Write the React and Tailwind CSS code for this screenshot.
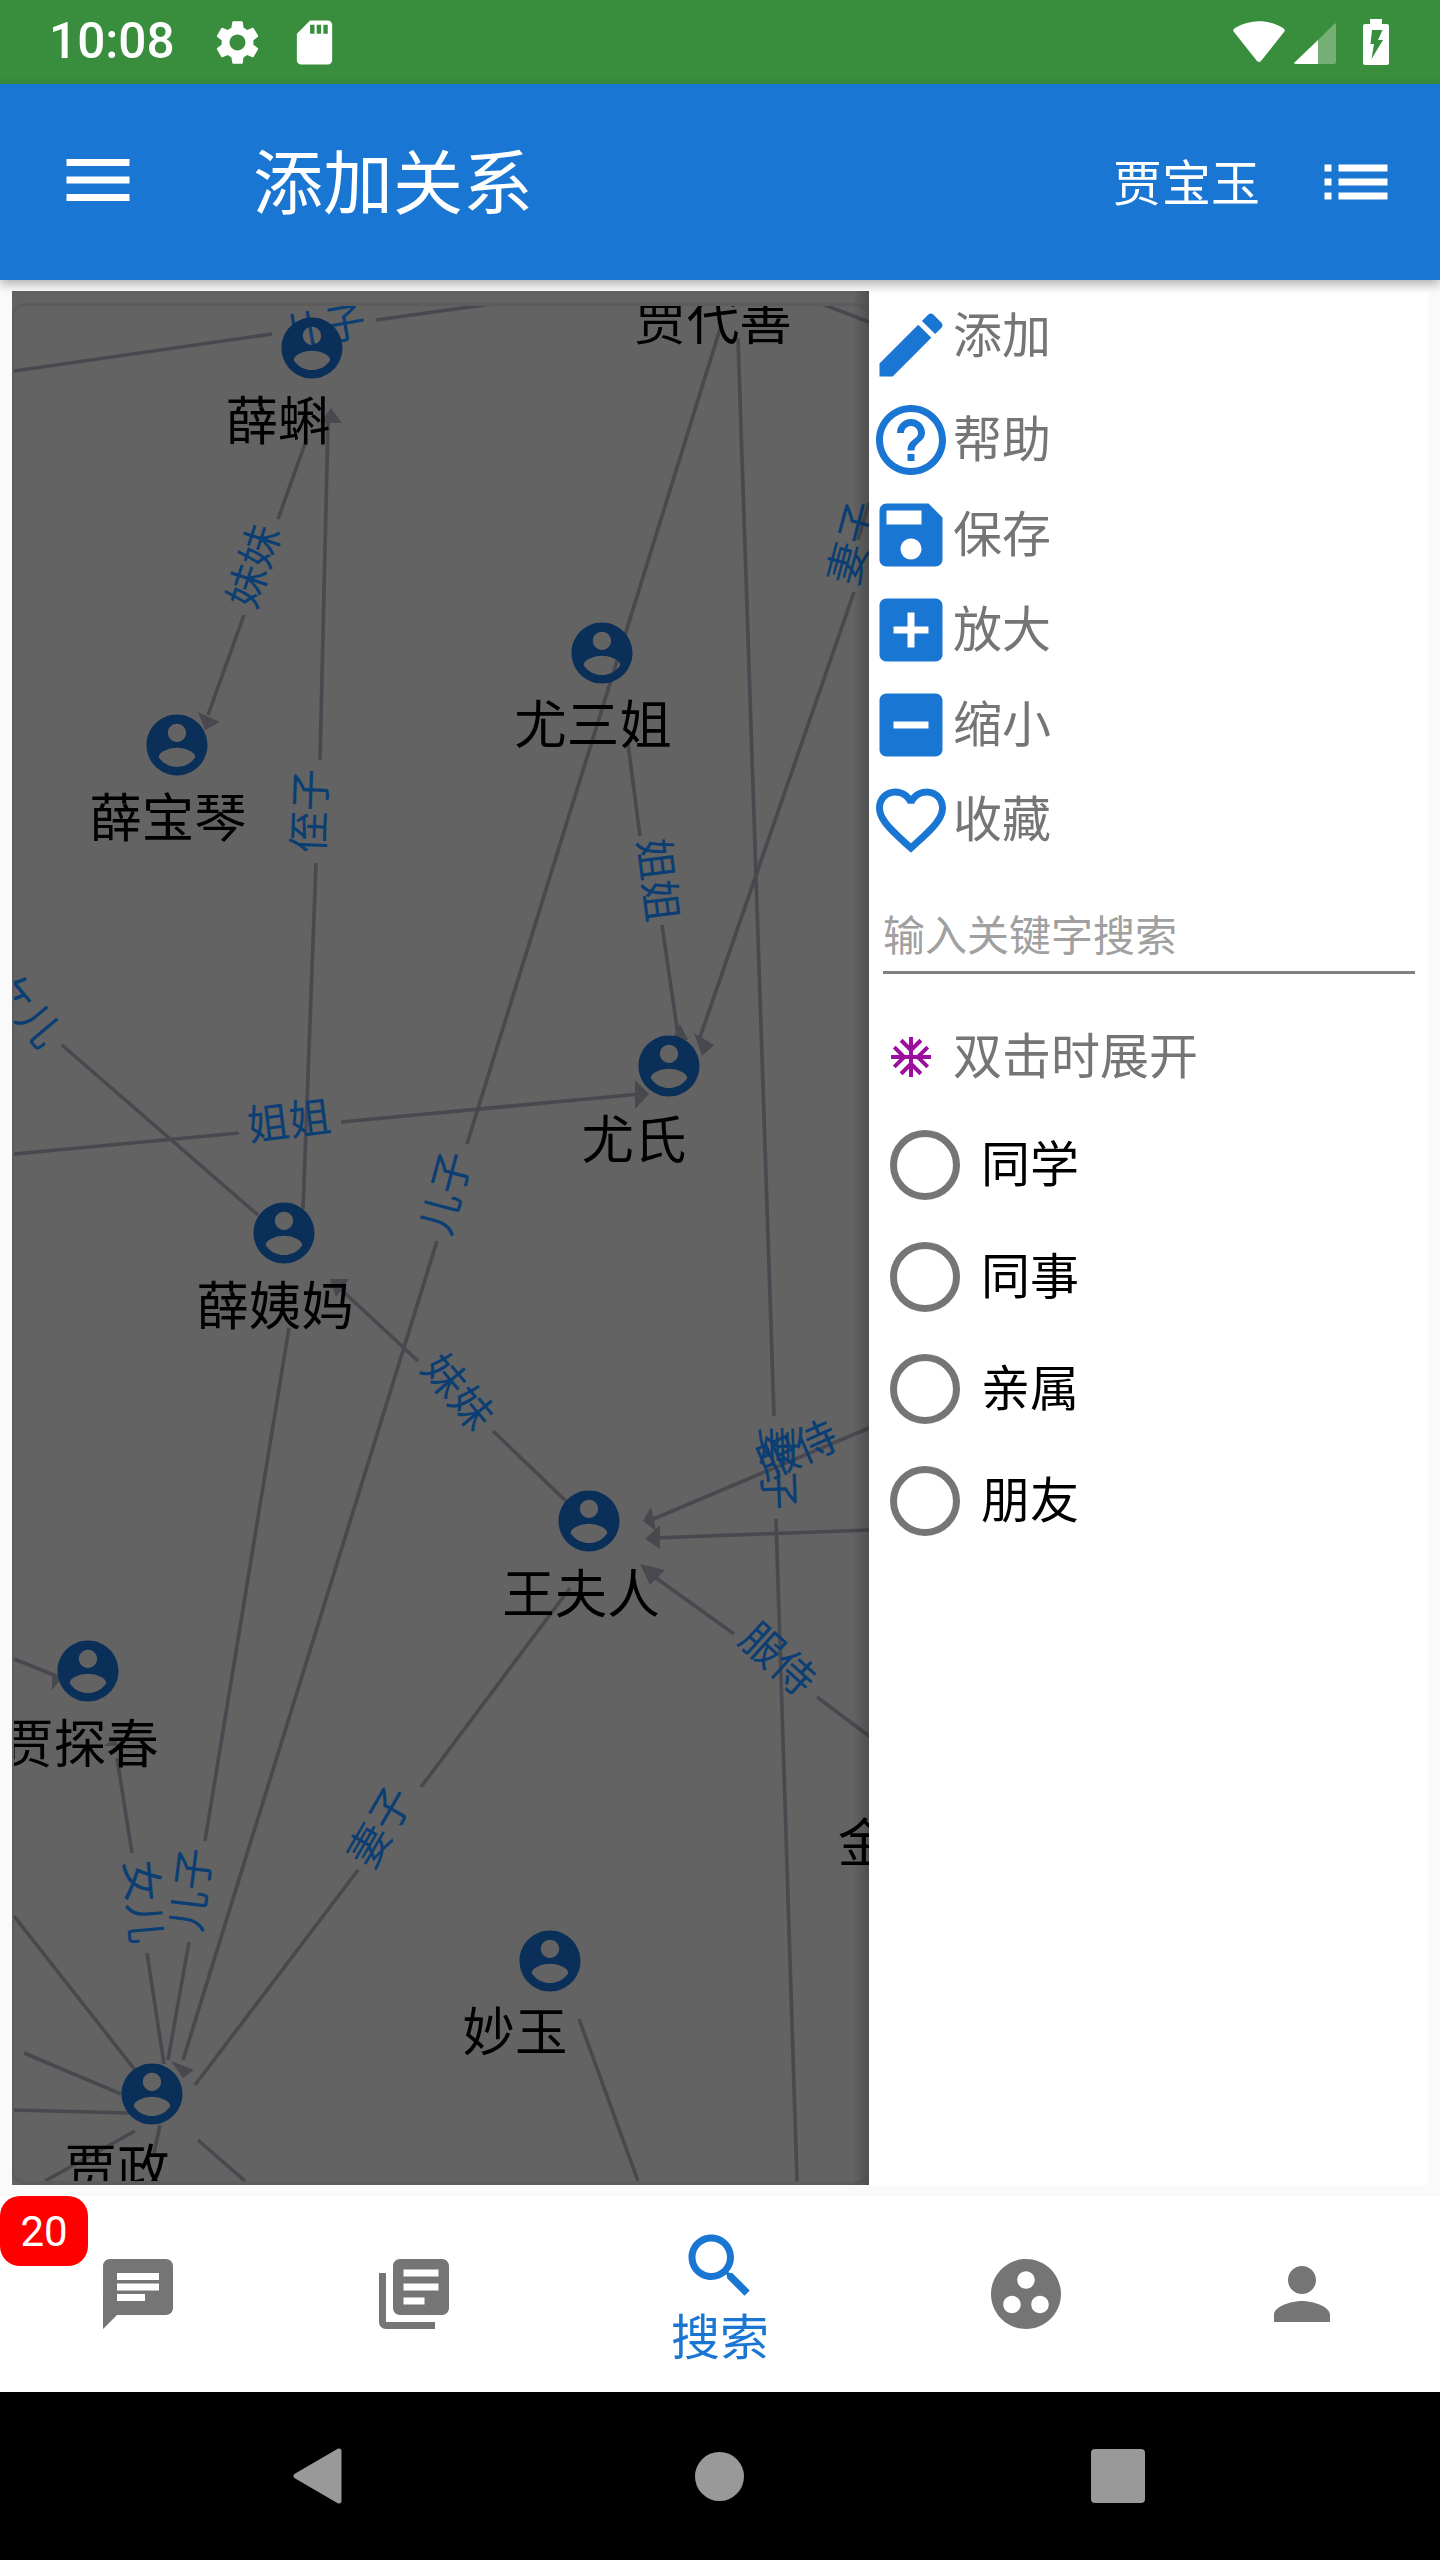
const ICONS = {
  menu: 'M3 18h18v-2H3v2zm0-5h18v-2H3v2zm0-7v2h18V6H3z',
  list: 'M3 13h2v-2H3v2zm0 4h2v-2H3v2zm0-8h2V7H3v2zm4 4h14v-2H7v2zm0 4h14v-2H7v2zM7 7v2h14V7H7z',
  settings:
    'M19.14 12.94c.04-.3.06-.61.06-.94 0-.32-.02-.64-.07-.94l2.03-1.58c.18-.14.23-.41.12-.61l-1.92-3.32c-.12-.22-.37-.29-.59-.22l-2.39.96c-.5-.38-1.03-.7-1.62-.94l-.36-2.54c-.04-.24-.24-.41-.48-.41h-3.84c-.24 0-.43.17-.47.41l-.36 2.54c-.59.24-1.13.57-1.62.94l-2.39-.96c-.22-.08-.47 0-.59.22L2.74 8.87c-.12.21-.08.47.12.61l2.03 1.58c-.05.3-.09.63-.09.94s.02.64.07.94l-2.03 1.58c-.18.14-.23.41-.12.61l1.92 3.32c.12.22.37.29.59.22l2.39-.96c.5.38 1.03.7 1.62.94l.36 2.54c.05.24.24.41.48.41h3.84c.24 0 .44-.17.47-.41l.36-2.54c.59-.24 1.13-.56 1.62-.94l2.39.96c.22.08.47 0 .59-.22l1.92-3.32c.12-.22.07-.47-.12-.61l-2.01-1.58zM12 15.6c-1.98 0-3.6-1.62-3.6-3.6s1.62-3.6 3.6-3.6 3.6 1.62 3.6 3.6-1.62 3.6-3.6 3.6z',
  sd: 'M18 2h-8L4.02 8 4 20c0 1.1.9 2 2 2h12c1.1 0 2-.9 2-2V4c0-1.1-.9-2-2-2zm-6 6h-2V4h2v4zm3 0h-2V4h2v4zm3 0h-2V4h2v4z',
  edit: 'M3 17.25V21h3.75L17.81 9.94l-3.75-3.75L3 17.25zM20.71 7.04c.39-.39.39-1.02 0-1.41l-2.34-2.34c-.39-.39-1.02-.39-1.41 0l-1.83 1.83 3.75 3.75 1.83-1.83z',
  help: 'M11 18h2v-2h-2v2zm1-16C6.48 2 2 6.48 2 12s4.48 10 10 10 10-4.48 10-10S17.52 2 12 2zm0 18c-4.41 0-8-3.59-8-8s3.59-8 8-8 8 3.59 8 8-3.59 8-8 8zm0-14c-2.21 0-4 1.79-4 4h2c0-1.1.9-2 2-2s2 .9 2 2c0 2-3 1.75-3 5h2c0-2.25 3-2.5 3-5 0-2.21-1.79-4-4-4z',
  save: 'M17 3H5c-1.11 0-2 .9-2 2v14c0 1.1.89 2 2 2h14c1.1 0 2-.9 2-2V7l-4-4zm-5 16c-1.66 0-3-1.34-3-3s1.34-3 3-3 3 1.34 3 3-1.34 3-3 3zm3-10H5V5h10v4z',
  plus: 'M19 3H5c-1.11 0-2 .9-2 2v14c0 1.1.89 2 2 2h14c1.1 0 2-.9 2-2V5c0-1.1-.9-2-2-2zm-2 10h-4v4h-2v-4H7v-2h4V7h2v4h4v2z',
  minus: 'M19 3H5c-1.1 0-2 .9-2 2v14c0 1.1.9 2 2 2h14c1.1 0 2-.9 2-2V5c0-1.1-.9-2-2-2zm-2 10H7v-2h10v2z',
  heart:
    'M16.5 3c-1.74 0-3.41.81-4.5 2.09C10.91 3.81 9.24 3 7.5 3 4.42 3 2 5.42 2 8.5c0 3.78 3.4 6.86 8.55 11.54L12 21.35l1.45-1.32C18.6 15.36 22 12.28 22 8.5 22 5.42 19.58 3 16.5 3zm-4.4 15.55l-.1.1-.1-.1C7.14 14.24 4 11.39 4 8.5 4 6.5 5.5 5 7.5 5c1.54 0 3.04.99 3.57 2.36h1.87C13.46 5.99 14.96 5 16.5 5c2 0 3.5 1.5 3.5 3.5 0 2.89-3.14 5.74-7.9 10.05z',
  snow: 'M22 11h-4.17l3.24-3.24-1.41-1.42L15 11h-2V9l4.66-4.66-1.42-1.41L13 6.17V2h-2v4.17L7.76 2.93 6.34 4.34 11 9v2H9L4.34 6.34 2.93 7.76 6.17 11H2v2h4.17l-3.24 3.24 1.41 1.42L9 13h2v2l-4.66 4.66 1.42 1.41L11 17.83V22h2v-4.17l3.24 3.24 1.42-1.41L13 15v-2h2l4.66 4.66 1.41-1.42L17.83 13H22z',
  chat: 'M20 2H4c-1.1 0-1.99.9-1.99 2L2 22l4-4h14c1.1 0 2-.9 2-2V4c0-1.1-.9-2-2-2zM6 9h12v2H6V9zm8 5H6v-2h8v2zm4-6H6V6h12v2z',
  books:
    'M4 6H2v14c0 1.1.9 2 2 2h14v-2H4V6zm16-4H8c-1.1 0-2 .9-2 2v12c0 1.1.9 2 2 2h12c1.1 0 2-.9 2-2V4c0-1.1-.9-2-2-2zm-1 9H9V9h10v2zm-4 4H9v-2h6v2zm4-8H9V5h10v2z',
  search:
    'M15.5 14h-.79l-.28-.27C15.41 12.59 16 11.11 16 9.5 16 5.91 13.09 3 9.5 3S3 5.91 3 9.5 5.91 16 9.5 16c1.61 0 3.09-.59 4.23-1.57l.27.28v.79l5 4.99L20.49 19l-4.99-5zm-6 0C7.01 14 5 11.99 5 9.5S7.01 5 9.5 5 14 7.01 14 9.5 11.99 14 9.5 14z',
  group:
    'M12 2C6.48 2 2 6.48 2 12s4.48 10 10 10 10-4.48 10-10S17.52 2 12 2zM8 17.5c-1.38 0-2.5-1.12-2.5-2.5s1.12-2.5 2.5-2.5 2.5 1.12 2.5 2.5-1.12 2.5-2.5 2.5zM9.5 8c0-1.38 1.12-2.5 2.5-2.5s2.5 1.12 2.5 2.5-1.12 2.5-2.5 2.5S9.5 9.38 9.5 8zm6.5 9.5c-1.38 0-2.5-1.12-2.5-2.5s1.12-2.5 2.5-2.5 2.5 1.12 2.5 2.5-1.12 2.5-2.5 2.5z',
  person: 'M12 12c2.21 0 4-1.79 4-4s-1.79-4-4-4-4 1.79-4 4 1.79 4 4 4zm0 2c-2.67 0-8 1.34-8 4v2h16v-2c0-2.66-5.33-4-8-4z',
  account:
    'M12 2C6.48 2 2 6.48 2 12s4.48 10 10 10 10-4.48 10-10S17.52 2 12 2zm0 3c1.66 0 3 1.34 3 3s-1.34 3-3 3-3-1.34-3-3 1.34-3 3-3zm0 14.2c-2.5 0-4.71-1.28-6-3.22.03-1.99 4-3.08 6-3.08 1.99 0 5.97 1.09 6 3.08-1.29 1.94-3.5 3.22-6 3.22z',
};

function Icon({ name, className }) {
  return (
    <svg viewBox="0 0 24 24" fill="currentColor" className={className}>
      <path d={ICONS[name]} />
    </svg>
  );
}

// graph coordinates are page pixels, the svg viewBox starts at the canvas corner
const EDGES = [
  [14, 371, 272, 334],
  [376, 320, 491, 304],
  [822, 304, 869, 322],
  [306, 441, 278, 519],
  [244, 615, 208, 715],
  [328, 423, 320, 760],
  [316, 863, 303, 1209],
  [628, 744, 640, 836],
  [662, 925, 678, 1035],
  [720, 329, 467, 1144],
  [437, 1241, 183, 2060],
  [738, 338, 774, 1416],
  [776, 1519, 797, 2181],
  [869, 503, 858, 540],
  [854, 592, 699, 1040],
  [62, 1045, 258, 1215],
  [14, 1154, 239, 1133],
  [341, 1122, 640, 1094],
  [289, 1328, 205, 1841],
  [189, 1942, 168, 2060],
  [117, 1758, 132, 1853],
  [147, 1953, 164, 2064],
  [335, 1284, 418, 1361],
  [493, 1431, 567, 1502],
  [570, 1588, 421, 1787],
  [358, 1870, 195, 2085],
  [652, 1575, 734, 1634],
  [817, 1697, 869, 1736],
  [651, 1520, 869, 1428],
  [654, 1538, 869, 1530],
  [14, 1916, 135, 2070],
  [24, 2053, 121, 2094],
  [14, 2110, 129, 2113],
  [135, 2131, 45, 2181],
  [160, 2125, 154, 2153],
  [198, 2140, 245, 2181],
  [579, 2019, 638, 2181],
  [14, 1659, 59, 1677],
];

const ARROWS = [
  '198,712 220,722 205,730',
  '331,408 342,423 320,423',
  '672,1040 688,1040 680,1024',
  '694,1033 714,1045 702,1056',
  '649,1094 635,1080 635,1109',
  '330,1279 349,1279 336,1297',
  '643,1521 651,1507 656,1531',
  '645,1539 660,1525 660,1549',
  '640,1564 665,1570 650,1585',
  '183,2078 171,2061 194,2070',
  '62,1678 52,1675 52,1690',
  '114,1738 104,1746 119,1746',
];

const EDGE_LABELS = [
  ['儿子', 324, 327, -10],
  ['妹妹', 254, 566, -72],
  ['侄子', 310, 811, -88],
  ['姐姐', 658, 880, 83],
  ['妻子', 853, 543, -75],
  ['女儿', 25, 1009, 50],
  ['姐姐', 289, 1121, -7],
  ['儿子', 446, 1193, -75],
  ['妹妹', 458, 1392, 50],
  ['服侍', 797, 1450, -24],
  ['妻子', 778, 1468, 88],
  ['妻子', 380, 1827, -60],
  ['服侍', 778, 1659, 42],
  ['儿子', 191, 1890, -83],
  ['女儿', 143, 1902, 85],
];

const NODES = [
  [312, 348],
  [177, 745],
  [602, 653],
  [669, 1066],
  [284, 1233],
  [589, 1521],
  [88, 1671],
  [550, 1961],
  [152, 2094],
];

const NODE_LABELS = [
  ['薛蝌', 278, 440],
  ['薛宝琴', 168, 837],
  ['尤三姐', 593, 744],
  ['贾代善', 713, 340],
  ['尤氏', 634, 1159],
  ['薛姨妈', 275, 1325],
  ['王夫人', 581, 1613],
  ['贾探春', 80, 1763],
  ['妙玉', 515, 2051],
  ['贾政', 117, 2188],
  ['金', 864, 1862],
];

const TOOLS = [
  ['edit', '添加'],
  ['help', '帮助'],
  ['save', '保存'],
  ['plus', '放大'],
  ['minus', '缩小'],
  ['heart', '收藏'],
];

const RELATIONS = ['同学', '同事', '亲属', '朋友'];

function Graph() {
  return (
    <div className="flex-1 bg-[#636363] pt-3">
      <div className="h-full rounded-[14px] border-t-[3px] border-b-[4px] border-l-[2px] border-[#5c5c5c] overflow-hidden">
        <svg viewBox="14 306 855 1875" className="w-full h-full block">
          {EDGES.map(([x1, y1, x2, y2], i) => (
            <line key={i} x1={x1} y1={y1} x2={x2} y2={y2} stroke="#48484f" strokeWidth="3.6" />
          ))}
          {ARROWS.map((points, i) => (
            <polygon key={i} points={points} fill="#48484f" />
          ))}
          {EDGE_LABELS.map(([text, x, y, angle], i) => (
            <text
              key={i}
              x={x}
              y={y + 15}
              textAnchor="middle"
              fontSize="42"
              fill="#0b3e72"
              transform={`rotate(${angle} ${x} ${y})`}
            >
              {text}
            </text>
          ))}
          {NODES.map(([x, y], i) => (
            <svg key={i} x={x - 36.6} y={y - 36.6} width="73.2" height="73.2" viewBox="0 0 24 24">
              <path d={ICONS.account} fill="#0a3059" />
            </svg>
          ))}
          {NODE_LABELS.map(([text, x, y], i) => (
            <text key={i} x={x} y={y} textAnchor="middle" fontSize="52.5" fill="#000">
              {text}
            </text>
          ))}
        </svg>
      </div>
    </div>
  );
}

function SidePanel() {
  return (
    <div className="w-[559px] shrink-0 bg-white relative pt-3">
      {/* drawer shadow falling on the canvas */}
      <div className="absolute right-full top-0 bottom-0 w-[16px] bg-gradient-to-l from-black/20 to-transparent" />
      {TOOLS.map(([icon, label], i) => (
        <div key={label} className="flex items-center h-[84px] mb-[11px]">
          <Icon name={icon} className="w-[84px] h-[84px] text-[#1976d2] shrink-0" />
          <span className={`text-[49px] leading-none text-[#757575] ${i === 0 ? 'mb-[17px]' : ''}`}>{label}</span>
        </div>
      ))}
      <input
        placeholder="输入关键字搜索"
        className="block mt-[39px] ml-[14px] w-[532px] h-[73px] border-b-[3px] border-[#808080] text-[42px] placeholder:text-[#a0a0a0] outline-none"
      />
      <div className="flex items-center h-[84px] mt-[41px] pl-[18px]">
        <Icon name="snow" className="w-[48px] h-[48px] text-[#9c0f9c] shrink-0" />
        <span className="ml-[18px] text-[49px] leading-none text-[#757575]">双击时展开</span>
      </div>
      <div className="mt-[10px]">
        {RELATIONS.map((label) => (
          <div key={label} className="flex items-center h-[112px] pl-[21px]">
            <div className="w-[70px] h-[70px] rounded-full border-[7px] border-[#757575] shrink-0" />
            <span className="ml-[21px] text-[49px] leading-none text-black">{label}</span>
          </div>
        ))}
      </div>
    </div>
  );
}

export default function App() {
  return (
    <div className="w-[1440px] h-[2560px] flex flex-col overflow-hidden bg-white font-['Roboto','Noto_Sans_CJK_SC',sans-serif]">
      {/* status bar */}
      <div className="h-[84px] shrink-0 bg-[#388e3c] flex items-center text-white pl-[49px] pr-[51px]">
        <span className="text-[49.5px] leading-none font-medium w-[123px]">10:08</span>
        <Icon name="settings" className="w-[53px] h-[53px] ml-[39px]" />
        <Icon name="sd" className="w-[53px] h-[53px] ml-[24px]" />
        <div className="ml-auto flex items-center">
          <svg viewBox="0 0 54 43" className="w-[54px] h-[43px] mb-[2px]" fill="#fff">
            <path d="M3 8C18-1 36-1 51 8Q54 10 52 12L29 41Q27 43 25 41L2 12Q0 10 3 8Z" />
          </svg>
          <svg viewBox="0 0 42 42" className="w-[42px] h-[42px] ml-[8px] mt-[2px]" fill="#fff">
            <path d="M24 18V42H2Q-1 42 1 40Z" />
            <path d="M24 18L40 2Q42 0 42 3V40Q42 42 40 42H24Z" opacity="0.3" />
          </svg>
          <svg viewBox="0 0 26 46" className="w-[26px] h-[46px] ml-[27px]">
            <path d="M7 0H19V5H24Q26 5 26 7V44Q26 46 24 46H2Q0 46 0 44V7Q0 5 2 5H7Z" fill="#fff" />
            <polygon points="9,11 19.5,11 15,21 20,21 8.5,40 11,25 7.5,25" fill="#388e3c" />
          </svg>
        </div>
      </div>

      {/* app bar */}
      <div className="h-[196px] shrink-0 bg-[#1976d2] flex items-center text-white relative z-20 shadow-[0_4px_10px_rgba(0,0,0,0.3)]">
        <Icon name="menu" className="w-[84px] h-[84px] ml-[56px] mb-[4px]" />
        <span className="ml-[113px] mt-[6px] text-[70px] leading-none">添加关系</span>
        <span className="ml-auto mt-[5px] text-[49px] leading-none">贾宝玉</span>
        <Icon name="list" className="w-[84px] h-[84px] ml-[54px] mr-[42px]" />
      </div>

      {/* main */}
      <div className="flex-1 min-h-0 bg-[#fafafa] px-3 py-[11px] flex">
        <Graph />
        <SidePanel />
      </div>

      {/* bottom nav */}
      <div className="h-[196px] shrink-0 bg-white flex relative text-[#757575]">
        <div className="absolute left-0 top-0 w-[88px] h-[70px] rounded-[20px] bg-[#ff0000] text-white text-[42px] flex items-center justify-center z-10">
          20
        </div>
        <div className="w-[276px] flex items-center justify-center">
          <Icon name="chat" className="w-[84px] h-[84px]" />
        </div>
        <div className="w-[276px] flex items-center justify-center">
          <Icon name="books" className="w-[84px] h-[84px]" />
        </div>
        <div className="w-[336px] flex flex-col items-center pt-[28px] text-[#1976d2]">
          <Icon name="search" className="w-[84px] h-[84px]" />
          <span className="mt-[6px] text-[49px] leading-[49px]">搜索</span>
        </div>
        <div className="w-[276px] flex items-center justify-center">
          <Icon name="group" className="w-[84px] h-[84px]" />
        </div>
        <div className="w-[276px] flex items-center justify-center">
          <Icon name="person" className="w-[84px] h-[84px]" />
        </div>
      </div>

      {/* system nav */}
      <div className="h-[168px] shrink-0 bg-black flex items-center pl-[293px]">
        <svg viewBox="0 0 49 56" className="w-[49px] h-[56px]" fill="#999">
          <path d="M46 3L3 28L46 53Z" stroke="#999" strokeWidth="5" strokeLinejoin="round" />
        </svg>
        <div className="w-[49px] h-[49px] rounded-full bg-[#999] ml-[353px]" />
        <div className="w-[54px] h-[54px] rounded-[4px] bg-[#999] ml-[347px]" />
      </div>
    </div>
  );
}
